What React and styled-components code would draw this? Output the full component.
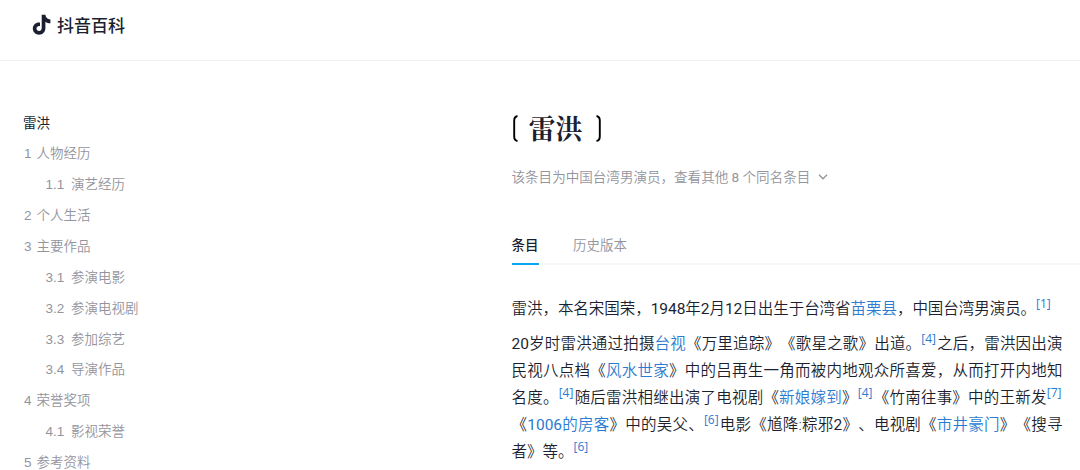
import React, { useState } from 'react'
import styled, { createGlobalStyle } from 'styled-components';

const GlobalStyle = createGlobalStyle`
  * {
    box-sizing: border-box;
  }

  body {
    margin: 0;
    background: #fff;
    color: #1c1f30;
    font-family: "Liberation Sans", "Noto Sans CJK SC", sans-serif;
    text-spacing-trim: space-all;
    overflow: hidden;
  }

  ul, h1, p {
    margin: 0;
    padding: 0;
    list-style: none;
  }
`;

const Page = styled.div`
  height: 470px;
  overflow: hidden;
`;

const Header = styled.header`
  display: flex;
  align-items: flex-start;
  height: 61px;
  padding: 14px 0 0 32px;
  border-bottom: 1px solid #f1f1f3;
`;

const LogoIcon = styled.svg`
  width: 19px;
  height: 21px;
`;

const LogoText = styled.span`
  margin-left: 6px;
  font-size: 17px;
  font-weight: 500;
  line-height: 25px;
`;

const Main = styled.main`
  display: flex;
`;

const Catalog = styled.ul`
  flex: none;
  width: 511.5px;
  padding: 46.5px 0 0 23px;
`;

const CatalogItem = styled.li`
  display: flex;
  height: 30.87px;
  padding-left: ${({ $level }) => ($level === 2 ? 22.5 : $level === 1 ? 1 : 0)}px;
  color: ${({ $level }) => ($level ? '#93949d' : '#1c1f30')};
  font-size: 13.5px;
  font-weight: ${({ $level }) => ($level ? 350 : 400)};
  line-height: 31px;

  > span {
    width: ${({ $level }) => ($level === 2 ? 25.5 : 12.5)}px;
  }
`;

const Article = styled.article`
  flex: 1;
  padding-top: 48px;
`;

const Title = styled.h1`
  display: flex;
  align-items: center;
  height: 38px;
  font-family: "Noto Serif CJK SC", "Noto Sans CJK SC", serif;
  font-size: 27px;
  font-weight: 700;
  line-height: 36px;

  > span {
    margin: 0 13px 0 11px;
  }
`;

const Bracket = styled.svg`
  width: 6px;
  height: 27px;
  margin-top: 1px;
  transform: ${({ $right }) => ($right ? 'scaleX(-1)' : 'none')};
`;

const SubTitle = styled.div`
  display: flex;
  align-items: center;
  height: 20px;
  margin-top: 20px;
  color: #93949d;
  font-family: Roboto, "Noto Sans CJK SC", sans-serif;
  font-size: 13.55px;
  font-weight: 350;
  line-height: 20px;
  white-space: pre;

  > svg {
    width: 10px;
    height: 6px;
    margin-left: 8px;
  }
`;

const TabNav = styled.ul`
  display: flex;
  gap: 34.5px;
  height: 34px;
  margin-top: 44px;
  border-bottom: 2px solid #f7f7f8;
`;

const TabItem = styled.li`
  height: 34px;
  border-bottom: 2px solid ${({ $active }) => ($active ? '#0ba5f4' : 'transparent')};
  color: ${({ $active }) => ($active ? '#1c1f30' : '#93949d')};
  font-size: 13.5px;
  font-weight: ${({ $active }) => ($active ? 500 : 350)};
  line-height: 29px;
  cursor: pointer;
`;

const Paragraph = styled.p`
  width: 551px;
  margin-top: ${({ $gap }) => $gap}px;
  font-family: Roboto, "Noto Sans CJK SC", sans-serif;
  font-size: 15.5px;
  font-weight: 350;
  line-height: 27.1px;
`;

const Line = styled.span`
  display: block;
  width: ${({ $width }) => ($width ? `${$width}px` : 'auto')};
  height: 27.1px;
  letter-spacing: ${({ $width }) => ($width ? '-0.04px' : 'normal')};
  text-align-last: ${({ $last }) => ($last ? 'left' : 'justify')};
  white-space: nowrap;
`;

const Num = styled.span`
  font-weight: 400;
`;

const Link = styled.a`
  color: #2b7bd1;
`;

const Ref = styled.sup`
  margin-right: 1px;
  color: #2b7bd1;
  font-family: "Open Sans", sans-serif;
  font-size: 12px;
  font-weight: 400;
  line-height: 0;
  vertical-align: 6px;
`;

const catalog = [
  { level: 0, title: '雷洪' },
  { level: 1, no: '1', title: '人物经历' },
  { level: 2, no: '1.1', title: '演艺经历' },
  { level: 1, no: '2', title: '个人生活' },
  { level: 1, no: '3', title: '主要作品' },
  { level: 2, no: '3.1', title: '参演电影' },
  { level: 2, no: '3.2', title: '参演电视剧' },
  { level: 2, no: '3.3', title: '参加综艺' },
  { level: 2, no: '3.4', title: '导演作品' },
  { level: 1, no: '4', title: '荣誉奖项' },
  { level: 2, no: '4.1', title: '影视荣誉' },
  { level: 1, no: '5', title: '参考资料' },
];

const tabs = ['条目', '历史版本'];

function App() {
  const [openTab, setOpenTab] = useState(0);
  return (
    <Page>
      <GlobalStyle />
      <Header>
        <LogoIcon viewBox="0 0 19 21">
          <path
            d="M9.700 .8h3.700c.2 2.500 1.900 4.400 5 4.700v3.700c-1.900 0-3.600-.5-5-1.500v6.300c0 4-2.800 6.700-6.300 6.700C3.500 20.700.8 17.900.8 14.500c0-3.700 3.100-6.500 7.200-6v3.700c-2-.4-3.500.7-3.500 2.300 0 1.400 1.100 2.500 2.500 2.500 1.600 0 2.700-1.100 2.700-3z"
            fill="#1c1f30"
          />
        </LogoIcon>
        <LogoText>抖音百科</LogoText>
      </Header>
      <Main>
        <Catalog>
          {catalog.map((item) => {
            return (
              <CatalogItem key={item.title} $level={item.level}>
                {item.no && <span>{item.no}</span>}
                {item.title}
              </CatalogItem>
            )
          })}
        </Catalog>
        <Article>
          <Title>
            <Bracket viewBox="0 0 6 27">
              <path d="M5.500 1C3 1.500 2.200 3 2.200 5.500v16c0 2.500.8 4 3.300 4.500" fill="none" stroke="#000" strokeWidth="1.900" />
            </Bracket>
            <span>雷洪</span>
            <Bracket $right viewBox="0 0 6 27">
              <path d="M5.500 1C3 1.500 2.200 3 2.200 5.500v16c0 2.500.8 4 3.300 4.500" fill="none" stroke="#000" strokeWidth="1.900" />
            </Bracket>
          </Title>
          <SubTitle>
            该条目为中国台湾男演员，查看其他 <Num>8</Num> 个同名条目
            <svg viewBox="0 0 10 6">
              <path d="M1 .8l4 4 4-4" fill="none" stroke="#93949d" strokeWidth="1.300" />
            </svg>
          </SubTitle>
          <TabNav>
            {tabs.map((tab, index) => {
              return (
                <TabItem key={tab} $active={openTab === index} onClick={() => {setOpenTab(index)}}>
                  {tab}
                </TabItem>
              )
            })}
          </TabNav>
          <Paragraph $gap={31}>
            <Line $width={539}>
              雷洪，本名宋国荣，<Num>1948</Num>年<Num>2</Num>月<Num>12</Num>日出生于台湾省<Link>苗栗县</Link>，中国台湾男演员。<Ref>[1]</Ref>
            </Line>
          </Paragraph>
          <Paragraph $gap={7.5}>
            <Line>
              <Num>20</Num>岁时雷洪通过拍摄<Link>台视</Link>《万里追踪》《歌星之歌》出道。<Ref>[4]</Ref>之后，雷洪因出演
            </Line>
            <Line>
              民视八点档《<Link>风水世家</Link>》中的吕再生一角而被内地观众所喜爱，从而打开内地知
            </Line>
            <Line>
              名度。<Ref>[4]</Ref>随后雷洪相继出演了电视剧《<Link>新娘嫁到</Link>》<Ref>[4]</Ref>《竹南往事》中的王新发<Ref>[7]</Ref>
            </Line>
            <Line>
              《<Link><Num>1006</Num>的房客</Link>》中的吴父、<Ref>[6]</Ref>电影《馗降:粽邪<Num>2</Num>》、电视剧《<Link>市井豪门</Link>》《搜寻
            </Line>
            <Line $last>
              者》等。<Ref>[6]</Ref>
            </Line>
          </Paragraph>
        </Article>
      </Main>
    </Page>
  )
}

export default App
